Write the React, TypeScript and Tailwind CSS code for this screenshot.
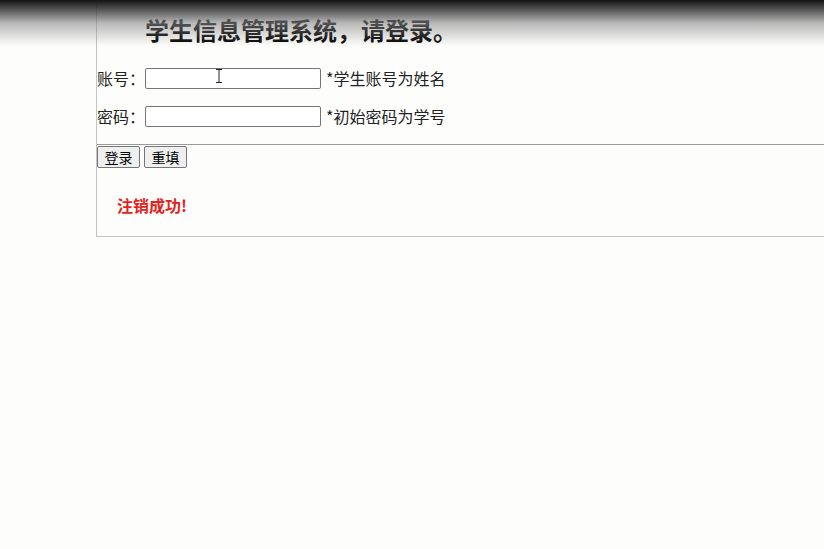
import React from "react";

const font = { fontFamily: '"Noto Sans CJK SC", "Microsoft YaHei", "Liberation Sans", sans-serif' };

export default function App() {
  return (
    <div className="relative w-full h-[549px] overflow-hidden bg-[#fdfefc] text-[#222]" style={font}>
      {/* dark fade at the top of the video frame */}
      <div className="pointer-events-none absolute inset-x-0 top-0 h-[46px] bg-gradient-to-b from-[#141414] via-[#8a8a8a]/60 to-transparent z-10" />

      <div className="ml-[96px] border-l border-b border-[#c4c4c4]">
        <div className="h-[144px]">
          <h2 className="pt-[15px] pl-[48px] text-[24px] leading-[30px] font-bold text-black">
            学生信息管理系统，请登录。
          </h2>

          <div className="mt-[22px] flex items-center h-[22px] text-[16px]">
            <span className="w-[48px] leading-[22px]">账号：</span>
            <div className="relative">
              <input className="w-[176px] h-[21px] border border-[#767676] rounded-[2px] bg-white" />
              {/* mouse cursor */}
              <svg className="absolute left-[71px] top-[3px]" width="6" height="14" viewBox="0 0 6 14">
                <path d="M0 0.5h6M3 0.5v13M0 13.5h6" stroke="#222" strokeWidth="1" fill="none" />
              </svg>
            </div>
            <span className="ml-[5px] leading-[22px]">*学生账号为姓名</span>
          </div>

          <div className="mt-[16px] flex items-center h-[22px] text-[16px]">
            <span className="w-[48px] leading-[22px]">密码：</span>
            <input type="password" className="w-[176px] h-[21px] border border-[#767676] rounded-[2px] bg-white" />
            <span className="ml-[5px] leading-[22px]">*初始密码为学号</span>
          </div>
        </div>

        <div className="border-t border-[#9a9a9a] h-[92px]">
          <div className="mt-[1px] flex gap-[4px]">
            <button className="w-[43px] h-[22px] bg-[#efefef] border border-[#767676] rounded-[2px] text-[14px] leading-[20px] text-black">
              登录
            </button>
            <button className="w-[43px] h-[22px] bg-[#efefef] border border-[#767676] rounded-[2px] text-[14px] leading-[20px] text-black">
              重填
            </button>
          </div>
          <p className="mt-[27px] pl-[20px] text-[16px] leading-[20px] font-bold text-[#e3231c]">注销成功!</p>
        </div>
      </div>
    </div>
  );
}
